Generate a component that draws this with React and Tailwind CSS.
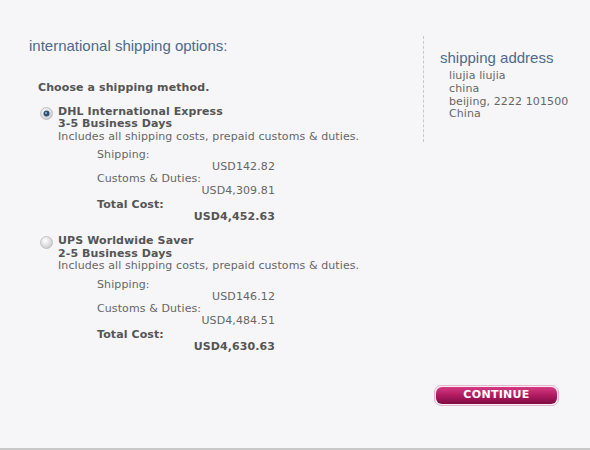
import React from "react";

function Radio({ checked }) {
  return (
    <svg width="13" height="13" viewBox="0 0 13 13" className="shrink-0">
      <defs>
        <radialGradient id={checked ? "rg1" : "rg2"} cx="40%" cy="35%" r="70%">
          <stop offset="0%" stopColor="#ffffff" />
          <stop offset="100%" stopColor="#c8c8cc" />
        </radialGradient>
      </defs>
      <circle cx="6.5" cy="6.5" r="6" fill={`url(#${checked ? "rg1" : "rg2"})`} stroke="#b8b8bc" strokeWidth="0.8" />
      {checked && <circle cx="6.5" cy="6.5" r="3" fill="#2f4f72" />}
      {checked && <circle cx="6" cy="6" r="1.2" fill="#7f9fbf" />}
    </svg>
  );
}

function Option({ checked, name, days, shipping, customs, total }) {
  return (
    <div className="flex flex-col">
      <div className="flex">
        <div className="w-[20px] pl-[2px] pt-[1px]">
          <Radio checked={checked} />
        </div>
        <div className="flex flex-col">
          <div className="font-bold text-[#555]">{name}</div>
          <div className="font-bold text-[#555]">{days}</div>
          <div>Includes all shipping costs, prepaid customs &amp; duties.</div>
        </div>
      </div>
      <div className="ml-[59px] w-[178px] flex flex-col mt-[6px] leading-[12px]">
        <div>Shipping:</div>
        <div className="text-right">{shipping}</div>
        <div>Customs &amp; Duties:</div>
        <div className="text-right">{customs}</div>
        <div className="font-bold text-[#555] mt-[2px]">Total Cost:</div>
        <div className="text-right font-bold text-[#555]">{total}</div>
      </div>
    </div>
  );
}

export default function App() {
  return (
    <div
      className="w-[590px] h-[450px] bg-[#f6f6f8] border-b-2 border-[#c8c8c8] flex flex-col text-[#666] text-[11px] leading-[12.5px] tracking-[0.1px]"
      style={{ fontFamily: '"DejaVu Sans", Verdana, sans-serif' }}
    >
      <div className="flex flex-1">
        <div className="w-[423px] pl-[29px] pt-[37px] flex flex-col">
          <div
            className="text-[15px] leading-[18px] text-[#4d6a8c] tracking-normal"
            style={{ fontFamily: '"Liberation Sans", Arial, sans-serif' }}
          >
            international shipping options:
          </div>
          <div className="pl-[9px] mt-[27px] font-bold text-[#555]">Choose a shipping method.</div>
          <div className="pl-[9px] mt-[11px] flex flex-col gap-[12px]">
            <Option
              checked
              name="DHL International Express"
              days="3-5 Business Days"
              shipping="USD142.82"
              customs="USD4,309.81"
              total="USD4,452.63"
            />
            <Option
              name="UPS Worldwide Saver"
              days="2-5 Business Days"
              shipping="USD146.12"
              customs="USD4,484.51"
              total="USD4,630.63"
            />
          </div>
        </div>
        <div className="flex flex-col flex-1">
          <div className="flex mt-[36px]">
            <div className="h-[106px] border-l border-dashed border-[#c8c8cc]" />
            <div className="pl-[16px] pt-[13px] flex flex-col">
              <div
                className="text-[15px] leading-[18px] text-[#4d6a8c] tracking-normal"
                style={{ fontFamily: '"Liberation Sans", Arial, sans-serif' }}
              >
                shipping address
              </div>
              <div className="pl-[9px] mt-[3px] flex flex-col leading-[12.8px]">
                <div>liujia liujia</div>
                <div>china</div>
                <div>beijing, 2222 101500</div>
                <div>China</div>
              </div>
            </div>
          </div>
          <div className="mt-auto mb-[42px] ml-[11px]">
            <div className="w-[125px] h-[21px] rounded-[7px] border border-[#e3b5cc] bg-[#fbeef4] p-[1px]">
              <div className="w-full h-full rounded-[6px] bg-gradient-to-b from-[#d43a82] via-[#b01a62] to-[#7e0c42] flex items-center justify-center">
                <span
                  className="text-white font-bold text-[11px] tracking-[0.3px]"
                  style={{ fontFamily: '"DejaVu Sans", Verdana, sans-serif' }}
                >
                  CONTINUE
                </span>
              </div>
            </div>
          </div>
        </div>
      </div>
    </div>
  );
}
